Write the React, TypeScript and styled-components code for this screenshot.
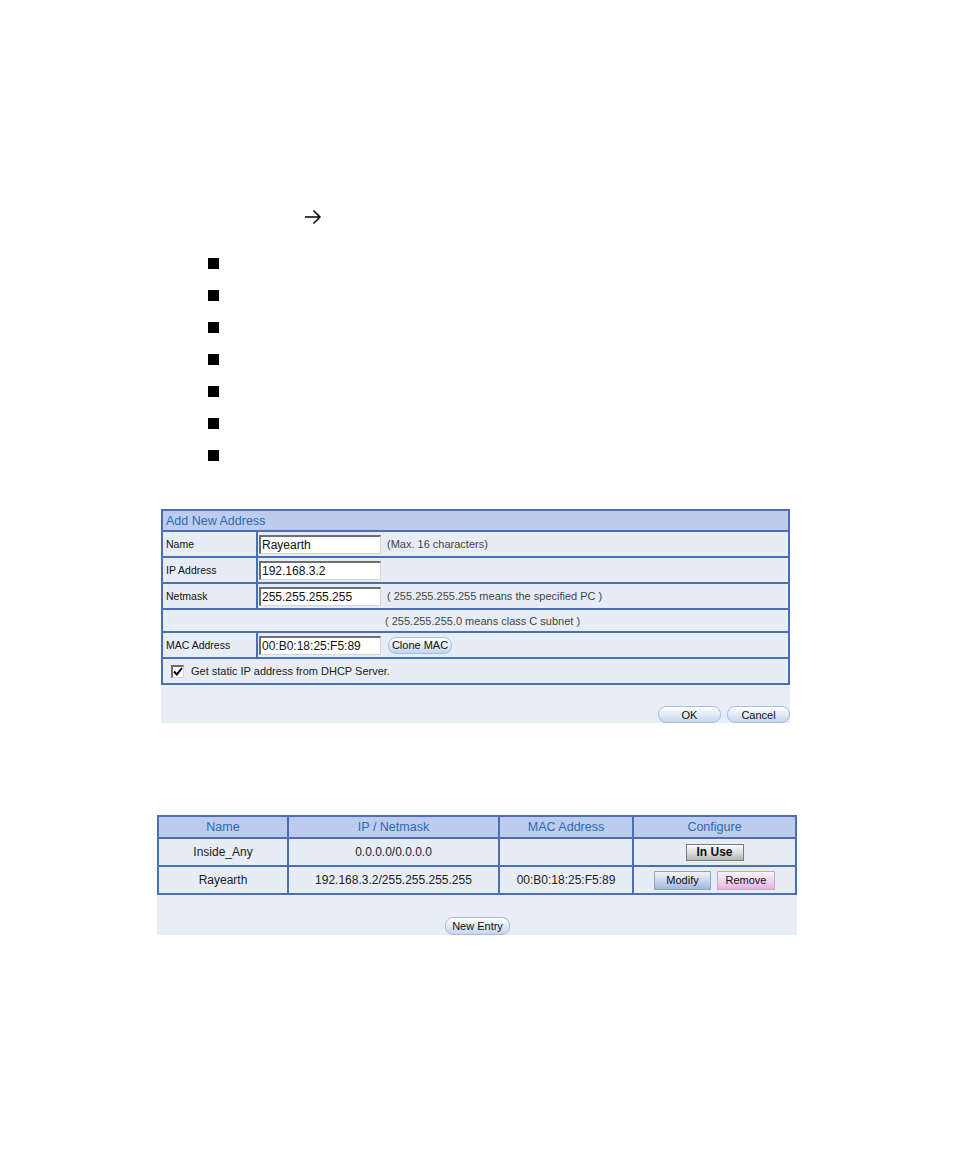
import React from "react";
import styled, { createGlobalStyle } from "styled-components";

const GlobalStyle = createGlobalStyle`
  html, body { margin: 0; padding: 0; background: #ffffff; }
  body { font-family: "Liberation Sans", Arial, sans-serif; color: #111; }
  * { box-sizing: border-box; }
`;

const Page = styled.div`
  width: 954px;
  min-height: 1155px;
  padding-top: 209px;
  display: flex;
  flex-direction: column;
  align-items: flex-start;
`;

const ArrowLine = styled.div`
  margin-left: 304px;
  height: 16px;
  display: flex;
  align-items: center;
`;

const BulletList = styled.ul`
  list-style: none;
  margin: 33px 0 0 208px;
  padding: 0;
  display: flex;
  flex-direction: column;
  gap: 21px;
`;

const Bullet = styled.li`
  width: 11px;
  height: 11px;
  background: #000;
`;

const FormPanel = styled.section`
  margin: 48px 0 0 161px;
  width: 629px;
  background: #e9edf7;
  display: flex;
  flex-direction: column;
`;

const FormBox = styled.div`
  border: 2px solid #4b6fb4;
  display: flex;
  flex-direction: column;
`;

const FormHeader = styled.div`
  height: 21px;
  background: #bdcbee;
  color: #2b6bae;
  font-size: 12.5px;
  padding-left: 3px;
  display: flex;
  align-items: center;
  border-bottom: 2px solid #4b6fb4;
`;

const FormRow = styled.div<{ $h?: number; $last?: boolean }>`
  height: ${(p) => p.$h ?? 26}px;
  display: grid;
  grid-template-columns: 95px 1fr;
  background: #e7edf7;
  border-bottom: ${(p) => (p.$last ? "none" : "2px solid #4b6fb4")};
`;

const LabelCell = styled.div`
  border-right: 2px solid #4b6fb4;
  font-size: 10.5px;
  color: #111;
  padding-left: 3px;
  display: flex;
  align-items: center;
`;

const FieldCell = styled.div`
  display: flex;
  align-items: center;
  padding-left: 1px;
`;

const NoteCell = styled.div`
  grid-column: 1 / span 2;
  display: flex;
  align-items: center;
  padding-left: 222px;
  font-size: 11px;
  color: #444;
`;

const CheckCell = styled.div`
  grid-column: 1 / span 2;
  display: flex;
  align-items: center;
  padding-left: 8px;
  gap: 7px;
  font-size: 11px;
  color: #222;
`;

const CheckBox = styled.span`
  width: 13px;
  height: 13px;
  background: #fff;
  border-top: 2px solid #6b6b6b;
  border-left: 2px solid #6b6b6b;
  border-right: 1px solid #d6d6d6;
  border-bottom: 1px solid #d6d6d6;
  display: flex;
  align-items: center;
  justify-content: center;
`;

const TextInput = styled.div`
  width: 122px;
  height: 19px;
  background: #fff;
  border-top: 2px solid #6e6e6e;
  border-left: 2px solid #6e6e6e;
  border-right: 1px solid #d4d4d4;
  border-bottom: 1px solid #d4d4d4;
  font-size: 12px;
  color: #111;
  padding-left: 1px;
  display: flex;
  align-items: center;
`;

const Hint = styled.span`
  margin-left: 6px;
  font-size: 11px;
  color: #444;
`;

const PillButton = styled.button<{ $w: number; $ml?: number; $h?: number }>`
  width: ${(p) => p.$w}px;
  height: ${(p) => p.$h ?? 17}px;
  margin-left: ${(p) => p.$ml ?? 0}px;
  padding: 0;
  border: 1px solid #a9bedd;
  border-radius: 8px;
  background: linear-gradient(#ffffff, #e4ecf8 45%, #c3d5ee);
  font-family: "Liberation Sans", Arial, sans-serif;
  font-size: 11px;
  color: #111;
  display: flex;
  align-items: center;
  justify-content: center;
`;

const FormFooter = styled.div`
  height: 38px;
  display: flex;
  justify-content: flex-end;
  align-items: flex-end;
  gap: 6px;
`;

const ListPanel = styled.section`
  margin: 92px 0 0 157px;
  width: 640px;
  background: #e9edf7;
  display: flex;
  flex-direction: column;
`;

const ListBox = styled.div`
  border: 2px solid #4b6fb4;
  display: flex;
  flex-direction: column;
`;

const ListRow = styled.div<{ $head?: boolean; $last?: boolean }>`
  height: ${(p) => (p.$head ? 22 : p.$last ? 26 : 28)}px;
  display: grid;
  grid-template-columns: 130px 211px 134px 1fr;
  background: ${(p) => (p.$head ? "#bdcbee" : "#e7edf7")};
  color: ${(p) => (p.$head ? "#2b6bae" : "#222")};
  font-size: ${(p) => (p.$head ? "12.5px" : "12px")};
  border-bottom: ${(p) => (p.$last ? "none" : "2px solid #4b6fb4")};
`;

const ListCell = styled.div<{ $last?: boolean }>`
  display: flex;
  align-items: center;
  justify-content: center;
  gap: 6px;
  border-right: ${(p) => (p.$last ? "none" : "2px solid #4b6fb4")};
`;

const tones = {
  gray: { bg: "linear-gradient(#fbfbfb, #dedede 50%, #b3b3b3)", border: "#7b7b7b" },
  blue: { bg: "linear-gradient(#f1f5fb, #c9d7ee 50%, #9fb6dc)", border: "#8ea4c8" },
  pink: { bg: "linear-gradient(#fdf3fd, #f0d6f0 50%, #e0b4e0)", border: "#c9a6c9" },
};

const RectButton = styled.button<{ $tone: keyof typeof tones; $w: number; $h: number; $bold?: boolean }>`
  width: ${(p) => p.$w}px;
  height: ${(p) => p.$h}px;
  padding: 0;
  border: 1px solid ${(p) => tones[p.$tone].border};
  background: ${(p) => tones[p.$tone].bg};
  font-family: "Liberation Sans", Arial, sans-serif;
  font-size: ${(p) => (p.$bold ? "12px" : "11px")};
  font-weight: ${(p) => (p.$bold ? 700 : 400)};
  color: #111;
  display: flex;
  align-items: center;
  justify-content: center;
`;

const ListFooter = styled.div`
  height: 40px;
  display: flex;
  justify-content: center;
  align-items: flex-end;
  padding-left: 1px;
`;

const Arrow = () => (
  <svg width="18" height="16" viewBox="0 0 18 16" fill="none" stroke="#000" strokeWidth="1.5">
    <path d="M1 8 H16" />
    <path d="M9.5 1.5 L16 8 L9.5 14.5" />
  </svg>
);

const Check = () => (
  <svg width="10" height="9" viewBox="0 0 10 9" fill="none" stroke="#000" strokeWidth="2">
    <path d="M1 4.5 L3.8 7.5 L9 1" />
  </svg>
);

export default function App() {
  return (
    <>
      <GlobalStyle />
      <Page>
        <ArrowLine>
          <Arrow />
        </ArrowLine>
        <BulletList>
          {Array.from({ length: 7 }).map((_, i) => (
            <Bullet key={i} />
          ))}
        </BulletList>

        <FormPanel>
          <FormBox>
            <FormHeader>Add New Address</FormHeader>
            <FormRow>
              <LabelCell>Name</LabelCell>
              <FieldCell>
                <TextInput>Rayearth</TextInput>
                <Hint>(Max. 16 characters)</Hint>
              </FieldCell>
            </FormRow>
            <FormRow>
              <LabelCell>IP Address</LabelCell>
              <FieldCell>
                <TextInput>192.168.3.2</TextInput>
              </FieldCell>
            </FormRow>
            <FormRow>
              <LabelCell>Netmask</LabelCell>
              <FieldCell>
                <TextInput>255.255.255.255</TextInput>
                <Hint>( 255.255.255.255 means the specified PC )</Hint>
              </FieldCell>
            </FormRow>
            <FormRow $h={23}>
              <NoteCell>( 255.255.255.0 means class C subnet )</NoteCell>
            </FormRow>
            <FormRow>
              <LabelCell>MAC Address</LabelCell>
              <FieldCell>
                <TextInput>00:B0:18:25:F5:89</TextInput>
                <PillButton $w={64} $ml={7}>Clone MAC</PillButton>
              </FieldCell>
            </FormRow>
            <FormRow $h={24} $last>
              <CheckCell>
                <CheckBox>
                  <Check />
                </CheckBox>
                Get static IP address from DHCP Server.
              </CheckCell>
            </FormRow>
          </FormBox>
          <FormFooter>
            <PillButton $w={63}>OK</PillButton>
            <PillButton $w={63}>Cancel</PillButton>
          </FormFooter>
        </FormPanel>

        <ListPanel>
          <ListBox>
            <ListRow $head>
              <ListCell>Name</ListCell>
              <ListCell>IP / Netmask</ListCell>
              <ListCell>MAC Address</ListCell>
              <ListCell $last>Configure</ListCell>
            </ListRow>
            <ListRow>
              <ListCell>Inside_Any</ListCell>
              <ListCell>0.0.0.0/0.0.0.0</ListCell>
              <ListCell></ListCell>
              <ListCell $last>
                <RectButton $tone="gray" $w={58} $h={17} $bold>In Use</RectButton>
              </ListCell>
            </ListRow>
            <ListRow $last>
              <ListCell>Rayearth</ListCell>
              <ListCell>192.168.3.2/255.255.255.255</ListCell>
              <ListCell>00:B0:18:25:F5:89</ListCell>
              <ListCell $last>
                <RectButton $tone="blue" $w={57} $h={19}>Modify</RectButton>
                <RectButton $tone="pink" $w={58} $h={19}>Remove</RectButton>
              </ListCell>
            </ListRow>
          </ListBox>
          <ListFooter>
            <PillButton $w={65} $h={18}>New Entry</PillButton>
          </ListFooter>
        </ListPanel>
      </Page>
    </>
  );
}
